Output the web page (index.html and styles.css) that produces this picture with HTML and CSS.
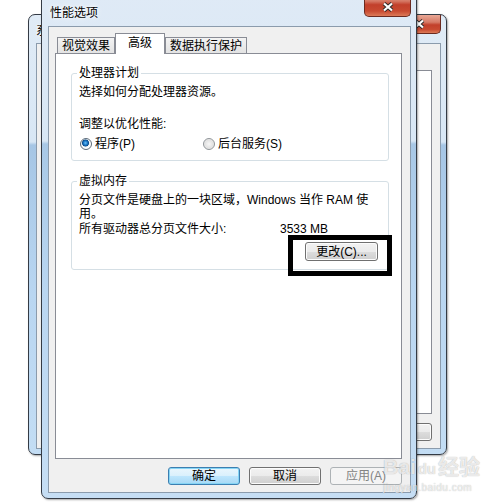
FILE: index.html
```html
<!DOCTYPE html>
<html>
<head>
    <meta charset="utf-8" />
    <title>性能选项</title>
    <link rel="stylesheet" href="styles.css">
</head>
<body>
    <!-- window behind -->
    <div class="window back">
        <div class="titlebar"><span class="peek">系</span></div>
        <div class="close"><svg width="12" height="10" viewBox="0 0 12 10"><path d="M2 1.5 L10 8.5 M10 1.5 L2 8.5" stroke="#2b2b2b" stroke-width="4"/><path d="M2 1.5 L10 8.5 M10 1.5 L2 8.5" stroke="#fff" stroke-width="2.2"/></svg></div>
        <div class="client">
            <div class="page"></div>
            <div class="buttons">
                <button class="btn" type="button"></button>
            </div>
        </div>
    </div>

    <!-- dialog -->
    <div class="window main">
        <div class="titlebar">性能选项</div>
        <div class="close"><svg width="12" height="10" viewBox="0 0 12 10"><path d="M2 1.5 L10 8.5 M10 1.5 L2 8.5" stroke="#2b2b2b" stroke-width="4"/><path d="M2 1.5 L10 8.5 M10 1.5 L2 8.5" stroke="#fff" stroke-width="2.2"/></svg></div>
        <div class="client">
            <div class="tabs">
                <div class="tab">视觉效果</div>
                <div class="tab active">高级</div>
                <div class="tab">数据执行保护</div>
            </div>
            <div class="page">
                <fieldset class="group cpu">
                    <legend>处理器计划</legend>
                    <p>选择如何分配处理器资源。</p>
                    <p class="adjust">调整以优化性能:</p>
                    <div class="radios">
                        <label class="opt"><span class="dot checked"></span>程序(P)</label>
                        <label class="opt"><span class="dot"></span>后台服务(S)</label>
                    </div>
                </fieldset>
                <fieldset class="group memory">
                    <legend>虚拟内存</legend>
                    <p class="desc">分页文件是硬盘上的一块区域，Windows 当作 RAM 使<br>用。</p>
                    <div class="size">
                        <span class="size-label">所有驱动器总分页文件大小:</span>
                        <span>3533 MB</span>
                    </div>
                    <div class="change-row">
                        <button class="btn change" type="button">更改(C)...</button>
                    </div>
                </fieldset>
            </div>
            <div class="buttons">
                <button class="btn default" type="button">确定</button>
                <button class="btn" type="button">取消</button>
                <button class="btn disabled" type="button">应用(A)</button>
            </div>
        </div>
    </div>

    <div class="watermark">
        <div class="logo">Bai<span class="paw">du</span>经验</div>
        <div class="site">jingyan.baidu.com</div>
    </div>
</body>
</html>
```

FILE: styles.css
```css
* {
    margin: 0;
    padding: 0;
    box-sizing: border-box;
}

body {
    width: 500px;
    height: 504px;
    overflow: hidden;
    position: relative;
    background: #fff;
    font: 12px/14px "Liberation Sans", "Noto Sans CJK SC", sans-serif;
    color: #000;
}

.window {
    position: absolute;
    display: flex;
    flex-direction: column;
    border: 1px solid #343b45;
    border-radius: 7px;
    box-shadow: 1px 1px 2px rgba(0, 0, 0, 0.35);
}

.titlebar {
    flex: 0 0 auto;
    white-space: nowrap;
    text-shadow: 0 0 6px #fff, 0 0 3px #fff;
}

.close {
    position: absolute;
    width: 45px;
    height: 19px;
    border: 1px solid #6b2a20;
    border-top: none;
    border-radius: 0 0 5px 5px;
    background: linear-gradient(#e9a896 0, #d67a66 40%, #c2402b 55%, #c84a31 80%, #dc7a58 100%);
    display: flex;
    justify-content: center;
    align-items: center;
}

.client {
    flex: 1;
    display: flex;
    flex-direction: column;
    background: #f0f0f0;
    border: 1px solid #8b9bac;
}

.page {
    flex: 1;
    background: #fff;
    border: 1px solid #898c95;
}

.buttons {
    display: flex;
    justify-content: flex-end;
    gap: 9px;
}

.btn {
    width: 72px;
    height: 18px;
    font: inherit;
    line-height: 14px;
    color: #000;
    border: 1px solid #707070;
    border-radius: 3px;
    background: linear-gradient(#f2f2f2 0, #ebebeb 50%, #dddddd 50%, #cfcfcf 100%);
    box-shadow: inset 0 0 0 1px #fcfcfc;
}

.btn.default {
    border-color: #3c7fb1;
    background: linear-gradient(#eaf6fd 0, #d9f0fc 50%, #bee6fd 50%, #a7d9f5 100%);
    box-shadow: inset 0 0 0 1px #86d5f5;
}

.btn.disabled {
    color: #838383;
    border-color: #adb2b5;
    background: #f4f4f4;
    box-shadow: none;
}

/* back window */
.back {
    left: 28px;
    top: 14px;
    width: 419px;
    height: 441px;
    padding: 0 5px 5px 7px;
    background: linear-gradient(#e0ebf6 0, #d8e7f5 127px, #a6c6e5 130px, #b9d6f1 280px, #c3ddf4 100%);
}

.back .titlebar {
    height: 28px;
    padding-top: 9px;
}

.peek {
    display: block;
    width: 6px;
    overflow: hidden;
}

.back .close {
    right: 5px;
    top: 0;
}

.back .client {
    padding: 26px 8px 7px 6px;
}

.back .buttons {
    margin-top: 9px;
}

/* dialog */
.main {
    left: 41px;
    top: -10px;
    width: 376px;
    height: 509px;
    padding: 0 5px 5px 6px;
    background: linear-gradient(#dfeaf6 0, #d8e7f5 150px, #a8c8e6 153px, #b9d6f1 300px, #c6def4 100%);
}

.main .titlebar {
    height: 35px;
    padding: 15px 0 0 2px;
}

.main .close {
    right: 5px;
    top: 0;
    width: 47px;
    height: 26px;
    align-items: flex-end;
    padding-bottom: 4px;
}

.main .client {
    padding: 6px 8px 7px 6px;
}

.tabs {
    display: flex;
    align-items: flex-end;
    height: 21px;
    margin-bottom: -1px;
    padding-left: 2px;
}

.tab {
    height: 17px;
    padding: 1px 4px 0;
    border: 1px solid #898c95;
    border-bottom: none;
    background: linear-gradient(#f3f3f3, #e2e2e2);
    line-height: 15px;
    white-space: nowrap;
}

.tab.active {
    position: relative;
    z-index: 1;
    height: 21px;
    padding: 2px 12px 0;
    background: #fff;
    line-height: 14px;
}

.main .page {
    padding: 0 12px 0 15px;
}

.main .buttons {
    margin-top: 8px;
}

.group {
    border: 1px solid #d5dfe5;
    border-radius: 3px;
    padding: 5px 8px 9px 7px;
    min-inline-size: 0;
}

.group legend {
    padding: 1px 2px 0;
    margin-left: -2px;
    line-height: 13px;
}

.cpu {
    margin-top: 12px;
}

.adjust {
    margin-top: 18px;
}

.radios {
    display: grid;
    grid-template-columns: 123px auto;
    margin-top: 6px;
    padding-left: 1px;
}

.opt {
    display: flex;
    align-items: center;
    gap: 3px;
}

.dot {
    width: 12px;
    height: 12px;
    border-radius: 50%;
    border: 1px solid #8f9498;
    background: radial-gradient(circle at 50% 50%, #f7f7f7 0, #e2e2e2 4px, #f4f4f4 6px);
}

.dot.checked {
    border-color: #5c6a78;
    background: radial-gradient(circle at 45% 40%, #6cc0f5 0, #1f7fcf 1.8px, #0b4c8c 3.2px, #e6eef4 3.8px, #ffffff 5px);
}

.memory {
    margin-top: 13px;
    padding-bottom: 8px;
}

.desc {
    line-height: 14px;
}

.size {
    display: flex;
    margin-top: 1px;
}

.size-label {
    width: 201px;
}

.change-row {
    display: flex;
    justify-content: flex-end;
    margin-top: 6px;
}

.btn.change {
    position: relative;
    width: 73px;
    height: 19px;
    margin-right: 2px;
}

/* annotation frame round the button */
.btn.change::after {
    content: "";
    position: absolute;
    left: -18px;
    top: -8px;
    right: -15px;
    bottom: -16px;
    border: 5px solid #000;
}

.watermark {
    position: absolute;
    left: 383px;
    top: 455px;
    color: rgba(255, 255, 255, 0.75);
    text-shadow: 0 0 1px rgba(0, 0, 0, 0.35);
}

.logo {
    font-size: 21px;
    line-height: 24px;
    font-weight: bold;
    white-space: nowrap;
}

.paw {
    font-size: 15px;
    margin: 0 2px;
}

.site {
    font-size: 10px;
    line-height: 10px;
    margin-top: 2px;
    letter-spacing: 0.5px;
}
```
